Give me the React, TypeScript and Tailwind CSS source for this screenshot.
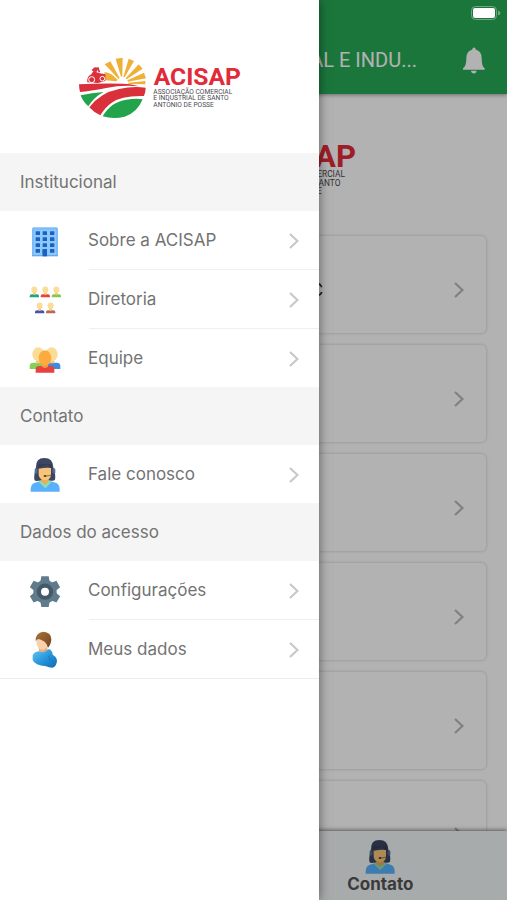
import type { ReactNode } from "react";

function Chevron({ className }: { className: string }) {
  return (
    <svg viewBox="0 0 10 16" className={`h-4 w-[10px] shrink-0 ${className}`} fill="none" aria-hidden="true">
      <path d="M1 1 L8.500 8 L1 15" stroke="currentColor" strokeWidth="2.200" />
    </svg>
  );
}

function Logo({ className }: { className: string }) {
  return (
    <svg viewBox="27 36 486 186" className={className} role="img" aria-label="ACISAP">
      <g fill="#eeb036">
        <path d="M104 58 L121 49 L149 99 L146 102 Z" />
        <path d="M137 41 L158 38 L157 94 L153 95 Z" />
        <path d="M176 41 L192 48 L164 97 L160 96 Z" />
        <path d="M206 58 L218 71 L170 103 L167 100 Z" />
        <path d="M222 83 L228 100 L174 110 L172 106 Z" />
        <path d="M175 113 L226 108 L226 118 L175 117 Z" />
        <path d="M103 82 Q119 80 143 104 L139 109 L106 106 Z" />
      </g>
      <path d="M27 118 Q90 114 157 116 Q188 117 208 124 Q155 119 109 129 Q60 138 30 141 Q27 130 27 118 Z" fill="#d9303c" />
      <path d="M32 151 Q66 143 101 141 Q72 156 55 184 Q38 169 32 151 Z" fill="#24a34d" />
      <path d="M58 187 Q91 143 147 132 Q190 122 227 128 Q227 141 222 153 Q155 151 125 173 Q105 187 91 211 Q71 202 58 187 Z" fill="#d9303c" />
      <path d="M98 214 Q122 171 169 164 Q198 159 218 163 Q202 203 164 215 Q130 224 98 214 Z" fill="#24a34d" />
      <path d="M52 112 Q50 94 64 88 L70 78 L86 84 L106 88 V108 L84 114 Z" fill="#d9303c" />
      <g fill="none" stroke="#fff" strokeWidth="3">
        <circle cx="65" cy="104" r="9" />
        <circle cx="97" cy="101" r="7" />
      </g>
      <path d="M66 76 L84 69 L88 82" fill="none" stroke="#d9303c" strokeWidth="5" />
      <circle cx="76" cy="74" r="7" fill="#d9303c" />
      <text x="251" y="121" fill="#e22b38" fontSize="74" fontWeight="700" fontFamily="Roboto, 'Liberation Sans', sans-serif">
        ACISAP
      </text>
      <g fill="#4d4a50" fontSize="20" fontFamily="Roboto, 'Liberation Sans', sans-serif">
        <text x="250" y="146">ASSOCIAÇÃO COMERCIAL</text>
        <text x="250" y="166">E INDUSTRIAL DE SANTO</text>
        <text x="250" y="186">ANTÔNIO DE POSSE</text>
      </g>
    </svg>
  );
}

function BuildingIcon() {
  return (
    <svg viewBox="87 248 96 108" className="h-9 w-8" aria-hidden="true">
      <path d="M96 269 Q96 264 101 264 H169 Q174 264 174 269 V350 H96 Z" fill="#7dbcf8" />
      <path d="M102 271 H168 V350 H102 Z" fill="#8ec7fb" />
      <g fill="#1763bf">
        {[276, 294, 312, 329].map((y) =>
          [107, 128, 150].map((x) => <rect key={`${x}-${y}`} x={x} y={y} width="13" height="11" rx="1" />)
        )}
        <rect x="128" y="329" width="13" height="21" />
      </g>
      <path d="M96 347 H174 V351 H96 Z" fill="#69a9e8" />
      <path d="M128 332 H141 V351 H128 Z" fill="#1763bf" />
    </svg>
  );
}

function Member({ x, y, color }: { x: number; y: number; color: string }) {
  return (
    <g transform={`translate(${x} ${y})`}>
      <path d="M-4 12 H4 V24 H-4 Z" fill="#f8c877" />
      <ellipse cx="0" cy="8" rx="9" ry="9.500" fill="#fbdd98" />
      <path d="M-14 31 V27 Q-14 22 -8 22 H-5 Q0 26 5 22 H8 Q14 22 14 27 V31 Z" fill={color} />
    </g>
  );
}

function BoardIcon() {
  return (
    <svg viewBox="87 33 96 108" className="h-9 w-8" aria-hidden="true">
      <Member x={103} y={51} color="#1ca77e" />
      <Member x={136} y={51} color="#e8433c" />
      <Member x={169} y={51} color="#83c94f" />
      <Member x={119} y={99} color="#4653ac" />
      <Member x={152} y={99} color="#b56a58" />
    </svg>
  );
}

function TeamIcon() {
  return (
    <svg viewBox="87 210 96 108" className="h-9 w-8" aria-hidden="true">
      <path d="M89 297 V288 Q89 278 100 278 H126 V297 Z" fill="#86cf58" />
      <path d="M181 297 V288 Q181 278 170 278 H144 V297 Z" fill="#408bdd" />
      <path d="M108 265 H124 V280 H108 Z M147 265 H163 V280 H147 Z" fill="#f8c978" />
      <ellipse cx="115" cy="253" rx="18" ry="21" fill="#fbdc96" />
      <ellipse cx="155" cy="253" rx="18" ry="21" fill="#fbdc96" />
      <path d="M126 272 H144 V292 H126 Z" fill="#f59a2e" />
      <ellipse cx="135" cy="264" rx="19" ry="23" fill="#fdab3e" />
      <path d="M107 308 V298 Q107 288 118 288 H123 Q135 297 147 288 H152 Q163 288 163 298 V308 Z" fill="#e9423c" />
    </svg>
  );
}

function SupportIcon() {
  return (
    <svg viewBox="87 48 96 108" className="h-9 w-8" aria-hidden="true">
      <path d="M108 82 Q107 54 133 54 Q159 54 160 82 Q168 104 165 119 Q162 123 154 122 H114 Q104 125 103 118 Q101 107 108 82 Z" fill="#3d4560" />
      <path d="M92 155 V146 Q93 130 110 127 L122 123 H149 L162 127 Q178 130 179 146 V155 Z" fill="#5ab0fa" />
      <path d="M116 125 L123 121 H147 L155 125 L136 145 Z" fill="#83e3b7" />
      <path d="M124 114 H146 V126 L135 135 L124 126 Z" fill="#e8ad5d" />
      <path d="M116 86 Q140 82 153 84 V104 Q152 119 135 121 Q118 119 116 104 Z" fill="#f8c477" />
      <path d="M114 83 Q131 81 141 73 Q147 83 156 86 L155 72 H115 Z" fill="#353c55" />
      <rect x="104" y="85" width="8" height="16" rx="4" fill="#4e6e9c" />
      <rect x="158" y="85" width="8" height="16" rx="4" fill="#4e6e9c" />
      <path d="M160 98 Q157 107 138 108" fill="none" stroke="#4a4350" strokeWidth="2" />
      <ellipse cx="135" cy="108" rx="4" ry="3" fill="#4a332f" />
    </svg>
  );
}

function GearIcon() {
  return (
    <svg viewBox="87 36 96 108" className="h-9 w-8" aria-hidden="true">
      <g fill="#607b8b" transform="translate(135 95)">
        {[0, 60, 120, 180, 240, 300].map((a) => (
          <path key={a} d="M-14 -28 L-11 -46 H11 L14 -28 Z" transform={`rotate(${a})`} />
        ))}
        <circle r="35" />
      </g>
      <circle cx="135" cy="95" r="18" fill="none" stroke="#455a67" strokeWidth="13" />
      <circle cx="135" cy="95" r="12" fill="#fff" />
    </svg>
  );
}

function PersonIcon() {
  return (
    <svg viewBox="87 213 96 108" className="h-9 w-8 overflow-visible" aria-hidden="true">
      <defs>
        <linearGradient id="shirt" x1="0" y1="0" x2="1" y2="1">
          <stop offset="0" stopColor="#66c6f5" />
          <stop offset="0.500" stopColor="#2997dc" />
          <stop offset="1" stopColor="#0b69b5" />
        </linearGradient>
        <linearGradient id="hair" x1="0" y1="0" x2="1" y2="1">
          <stop offset="0" stopColor="#a9753b" />
          <stop offset="1" stopColor="#74421c" />
        </linearGradient>
      </defs>
      <path d="M98 286 Q104 272 125 274 L148 267 Q158 274 158 284 Q170 290 171 302 Q170 318 158 323 Q146 323 138 319 Q104 316 98 300 Z" fill="url(#shirt)" />
      <path d="M116 262 L142 257 V270 Q131 281 117 274 Z" fill="#e7ae82" />
      <path d="M109 238 Q116 230 141 236 L145 257 Q134 273 120 268 Q108 260 109 238 Z" fill="#f8d0ac" />
      <path d="M107 244 Q105 219 130 215 Q154 217 154 238 Q153 254 144 263 L140 253 L134 245 Q124 239 116 237 Q109 238 107 244 Z" fill="url(#hair)" />
      <path d="M146 287 Q146 300 158 305" fill="none" stroke="#1373b9" strokeWidth="2" />
    </svg>
  );
}

function BellIcon() {
  return (
    <svg viewBox="459 140 66 80" className="h-[27px] w-[22px]" fill="currentColor" aria-hidden="true">
      <path d="M487 147 Q487 141 492 141 Q497 141 497 147 Q515 152 515 173 Q515 198 524 203 V208 H459 V203 Q469 198 469 173 Q469 152 487 147 Z" />
      <path d="M483 211 H500 Q499 219 492 219 Q484 219 483 211 Z" />
    </svg>
  );
}

function BatteryIcon() {
  return (
    <svg viewBox="0 0 30 14" className="h-[14px] w-[30px]" aria-hidden="true">
      <rect x="0.500" y="0.500" width="25" height="13" rx="4" fill="none" stroke="#6fa982" />
      <rect x="2" y="2" width="22" height="10" rx="2" fill="#fff" />
      <path d="M27 4.500 Q29.500 5.500 29.500 7 Q29.500 8.500 27 9.500 Z" fill="#6fa982" />
    </svg>
  );
}

type Item = { label: string; icon: ReactNode };

const sections: { title: string; items: Item[]; closed?: boolean }[] = [
  {
    title: "Institucional",
    items: [
      { label: "Sobre a ACISAP", icon: <BuildingIcon /> },
      { label: "Diretoria", icon: <BoardIcon /> },
      { label: "Equipe", icon: <TeamIcon /> },
    ],
  },
  { title: "Contato", items: [{ label: "Fale conosco", icon: <SupportIcon /> }] },
  {
    title: "Dados do acesso",
    closed: true,
    items: [
      { label: "Configurações", icon: <GearIcon /> },
      { label: "Meus dados", icon: <PersonIcon /> },
    ],
  },
];

const cards = ["Consultas SPC", "Convênios", "Eventos", "Cursos", "Notícias", "Vagas"];

function Drawer() {
  return (
    <aside className="absolute inset-y-0 left-0 z-20 w-[319px] bg-white text-[#737373] shadow-[0_0_10px_rgba(0,0,0,0.5)]">
      <div className="flex h-[153px] items-center justify-center pt-[22px]">
        <Logo className="h-[62px] w-[162px]" />
      </div>
      <nav>
        {sections.map((section) => (
          <section key={section.title}>
            <h2 className="flex h-[58px] items-center bg-[#f5f5f5] px-5">{section.title}</h2>
            <ul className={section.closed ? "border-b border-[#ececec]" : ""}>
              {section.items.map((item, i) => (
                <li key={item.label}>
                  <a href="#" className="flex h-[58px] items-center pl-[29px]">
                    {item.icon}
                    <span className="ml-[27px] flex-1">{item.label}</span>
                    <Chevron className="mt-[2px] mr-5 text-[#c8c8c8]" />
                  </a>
                  {i < section.items.length - 1 && <div className="ml-[89px] h-px bg-[#efefef]" />}
                </li>
              ))}
            </ul>
          </section>
        ))}
      </nav>
    </aside>
  );
}

export default function App() {
  return (
    <div className="relative flex h-screen flex-col overflow-hidden bg-white font-['Inter','Liberation_Sans',sans-serif] text-[17px] leading-6">
      <header className="z-[1] flex h-[94px] shrink-0 items-end bg-[#28a957] pr-[22px] pb-5 text-white shadow-[0_1px_4px_rgba(0,0,0,0.4)]">
        <h1 className="flex-1 pr-[46px] text-right font-['Roboto','Liberation_Sans',sans-serif] text-xl leading-7 whitespace-nowrap">
          ASSOCIAÇÃO COMERCIAL E INDU...
        </h1>
        <button type="button" aria-label="Notificações">
          <BellIcon />
        </button>
      </header>

      <main className="flex min-h-0 flex-1 flex-col overflow-hidden px-5">
        <div className="flex h-[141px] shrink-0 justify-center pt-[37px]">
          <Logo className="h-[78px] w-[204px]" />
        </div>
        <ul className="flex flex-col gap-[10px]">
          {cards.map((card) => (
            <li key={card}>
              <a
                href="#"
                className="flex h-[99px] items-center rounded-md border border-[#ebebeb] pt-[10px] pr-[22px] shadow-[0_0_2px_rgba(0,0,0,0.15)]"
              >
                <span className="ml-[183px] text-[#222]">{card}</span>
                <Chevron className="ml-auto text-[#b8b8b8]" />
              </a>
            </li>
          ))}
        </ul>
      </main>

      <footer className="z-[1] grid h-[69px] shrink-0 grid-cols-2 bg-[#f1f5f5] leading-5 font-bold text-[#555] shadow-[0_-1px_4px_rgba(0,0,0,0.5)]">
        <a href="#" className="flex flex-col items-center pt-[7px]">
          <BuildingIcon />
          Início
        </a>
        <a href="#" className="flex flex-col items-center pt-[7px]">
          <SupportIcon />
          Contato
        </a>
      </footer>

      <div className="absolute inset-0 z-10 bg-black/30" />
      <div className="absolute top-[6px] right-[6px] z-20">
        <BatteryIcon />
      </div>
      <Drawer />
    </div>
  );
}
